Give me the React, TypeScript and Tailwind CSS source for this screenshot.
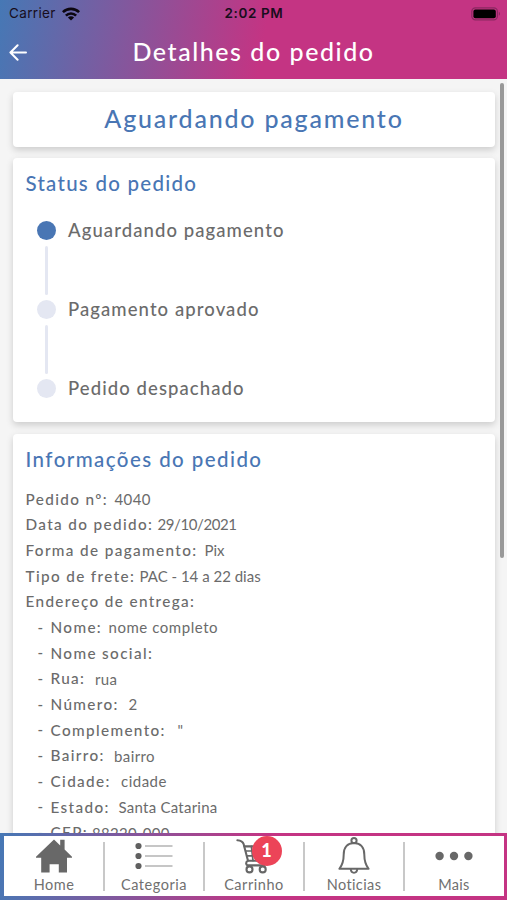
import React from "react";

type Info = { label: string; value?: string; width: string; spacing?: string };

const orderInfo: Info[] = [
  { label: "Pedido nº:", value: "4040", width: "w-[89px]", spacing: "tracking-[0.4px]" },
  { label: "Data do pedido:", value: "29/10/2021", width: "w-[132px]", spacing: "tracking-[-0.4px]" },
  { label: "Forma de pagamento:", value: "Pix", width: "w-[179px]", spacing: "tracking-[0px]" },
  { label: "Tipo de frete:", value: "PAC - 14 a 22 dias", width: "w-[114px]", spacing: "tracking-[0px]" },
  { label: "Endereço de entrega:", width: "w-[180px]" },
];

const address: Info[] = [
  { label: "Nome:", value: "nome completo", width: "w-[58px]", spacing: "tracking-[0.55px]" },
  { label: "Nome social:", width: "w-[110px]" },
  { label: "Rua:", value: "rua", width: "w-[44.5px]", spacing: "tracking-[0.4px]" },
  { label: "Número:", value: "2", width: "w-[78px]" },
  { label: "Complemento:", value: "\"", width: "w-[127px]" },
  { label: "Bairro:", value: "bairro", width: "w-[63.5px]", spacing: "tracking-[0.4px]" },
  { label: "Cidade:", value: "cidade", width: "w-[70.5px]", spacing: "tracking-[0.5px]" },
  { label: "Estado:", value: "Santa Catarina", width: "w-[68px]", spacing: "tracking-[0.25px]" },
  { label: "CEP:", value: "88220-000", width: "w-[41.5px]", spacing: "tracking-[0.3px]" },
];

function InfoRow({ label, value, width, spacing = "" }: Info) {
  return (
    <div className="flex h-[25.68px] items-center text-[15px] whitespace-nowrap">
      <span className={`${width} text-[15.3px] font-medium tracking-[1.36px]`}>{label}</span>
      {value && <span className={spacing}>{value}</span>}
    </div>
  );
}

function Step({ label, active, last }: { label: string; active?: boolean; last?: boolean }) {
  return (
    <div className={`flex ${last ? "h-[19px]" : "h-[79.4px]"}`}>
      <div className="flex w-[19px] flex-col items-center">
        <div className={`size-[19px] shrink-0 rounded-full ${active ? "bg-[#4976b4]" : "bg-[#e4e7f2]"}`} />
        {!last && <div className="mt-[6px] h-[49px] w-[2.6px] rounded-full bg-[#e4e7f2]" />}
      </div>
      <span className="ml-[12px] text-[18.5px] leading-[18px] font-medium tracking-[1.08px] whitespace-nowrap">{label}</span>
    </div>
  );
}

function HomeIcon() {
  return (
    <svg width="36" height="34" viewBox="0 0 36 34" fill="#686868">
      <path d="M18 0.5 24.2 6.4V0.8H28.6V10.6L36 17.8V18.8H31V33.4H22.8V25.2H13.6V33.4H5.2V18.8H0V17.8Z" />
    </svg>
  );
}

function ListIcon() {
  return (
    <svg width="38" height="28" viewBox="0 0 38 28">
      <g fill="#606060">
        <circle cx="3.5" cy="4" r="3.1" />
        <circle cx="3.5" cy="14" r="3.1" />
        <circle cx="3.5" cy="24" r="3.1" />
      </g>
      <path d="M10 4H37.5M10 14H37.5M10 24H37.5" stroke="#b4b4b4" strokeWidth="1.3" />
    </svg>
  );
}

function CartIcon() {
  return (
    <svg width="35" height="36" viewBox="0 0 35 36" fill="none" stroke="#666666" strokeWidth="2.1" strokeLinecap="round" strokeLinejoin="round">
      <path d="M1.4 2.2C4.5 2.5 6.8 3.2 7.6 6L12 22.7C10.4 23.6 10 24.5 10.2 25.6C10.4 26.8 11.3 27.4 12.6 27.4H28.5" />
      <path d="M8.6 8.4H31.5L28.3 22.7H12" />
      <path d="M9.8 13H30.4M11 17.8H29.4M15.4 8.4 17 22.7M20.5 8.4 21 22.7M26 8.4 25 22.7" strokeWidth="1.7" />
      <circle cx="13.5" cy="31.4" r="3" fill="white" />
      <circle cx="26.7" cy="31.4" r="3" fill="white" />
    </svg>
  );
}

function BellIcon() {
  return (
    <svg width="32" height="37" viewBox="0 0 32 37" fill="none" stroke="#686868" strokeWidth="2" strokeLinejoin="round">
      <circle cx="16" cy="3.6" r="2.6" />
      <path d="M16 6C9 6 5.7 11 5.7 17.5C5.7 24 4.8 27.5 1.4 31.8H30.6C27.2 27.5 26.3 24 26.3 17.5C26.3 11 23 6 16 6Z" />
      <path d="M12.7 31.8C12.9 34.5 14 35.8 16 35.8S19.1 34.5 19.3 31.8" />
    </svg>
  );
}

function MoreIcon() {
  return (
    <svg width="38" height="10" viewBox="0 0 38 10" fill="#686868">
      <circle cx="4.6" cy="5" r="4.2" />
      <circle cx="19" cy="5" r="4.2" />
      <circle cx="33.4" cy="5" r="4.2" />
    </svg>
  );
}

function Tab({ label, spacing, last, children }: { label: string; spacing: string; last?: boolean; children: React.ReactNode }) {
  return (
    <div className="relative flex w-[100px] shrink-0 flex-col items-center">
      <div className="flex h-[40px] items-center justify-center">{children}</div>
      <span className={`text-[14.5px] leading-[17px] text-[#707070] ${spacing}`}>{label}</span>
      {!last && <div className="absolute top-[6px] -right-[0.5px] h-[49px] w-[1.5px] bg-[#c8c8c8]" />}
    </div>
  );
}

export default function App() {
  return (
    <div className="flex h-[900px] w-[507px] flex-col overflow-hidden bg-[#f5f5f5] font-['Lato',sans-serif] text-[#6b6b6b]">
      <header className="h-[79px] shrink-0 bg-[linear-gradient(100deg,#4678b5_0%,#c43483_52%)]">
        <div className="grid h-[27px] grid-cols-3 items-center font-['Inter',sans-serif] text-[13.5px] text-[#180d1c]">
          <div className="flex items-center gap-[6px] pl-[9px]">
            <span className="tracking-[0.35px]">Carrier</span>
            <svg width="18" height="14" viewBox="0 0 18 14" fill="none" stroke="#0c0610" strokeWidth="2.6">
              <path d="M0.9 5.2A11.5 11.5 0 0 1 17.1 5.2" />
              <path d="M3.9 8.6A7.2 7.2 0 0 1 14.1 8.6" />
              <path d="M9 13.6 5.9 10.5A4.4 4.4 0 0 1 12.1 10.5Z" fill="#0c0610" stroke="none" />
            </svg>
          </div>
          <span className="pl-px text-center text-[13.5px] font-semibold tracking-[0.6px]">2:02 PM</span>
          <svg className="ml-auto mr-[6px]" width="30" height="14" viewBox="0 0 30 14">
            <rect x="0.8" y="0.8" width="25.6" height="12" rx="3.6" fill="none" stroke="#8a2861" strokeWidth="1.2" />
            <rect x="2.4" y="2.4" width="22.4" height="8.8" rx="2" fill="#000" />
            <path d="M27.8 4.8C29.4 5.4 29.4 8.2 27.8 8.8Z" fill="#8a2861" />
          </svg>
        </div>
        <div className="grid h-[50px] grid-cols-[60px_1fr_60px] items-center text-white">
          <svg className="ml-[9px]" width="18" height="17" viewBox="0 0 18 17" fill="none" stroke="white" strokeWidth="2" strokeLinecap="round" strokeLinejoin="round">
            <path d="M17 8.5H1.4M8.6 1.2 1.4 8.5 8.6 15.8" />
          </svg>
          <h1 className="text-center text-[25px] font-medium tracking-[1.55px]">Detalhes do pedido</h1>
        </div>
      </header>

      <main className="relative flex h-[754px] shrink-0 flex-col overflow-hidden pt-[12.5px] pr-[12px] pl-[13px]">
        <section className="flex h-[55px] shrink-0 items-center justify-center rounded-[4px] bg-white pb-px shadow-[0_3px_7px_rgba(0,0,0,0.17)]">
          <h2 className="text-[25px] font-medium tracking-[1.8px] text-[#4976b4]">Aguardando pagamento</h2>
        </section>

        <section className="mt-[11.5px] h-[264px] shrink-0 rounded-[4px] bg-white pt-[12px] pl-[12.5px] shadow-[0_3px_7px_rgba(0,0,0,0.17)]">
          <h3 className="text-[20.5px] leading-[26px] font-medium tracking-[1.25px] text-[#4976b4]">Status do pedido</h3>
          <div className="mt-[24.5px] ml-[11.5px]">
            <Step label="Aguardando pagamento" active />
            <Step label="Pagamento aprovado" />
            <Step label="Pedido despachado" last />
          </div>
        </section>

        <section className="mt-[12px] h-[600px] shrink-0 rounded-[4px] bg-white pt-[12px] pl-[12.5px] shadow-[0_3px_7px_rgba(0,0,0,0.17)]">
          <h3 className="text-[20.5px] leading-[26px] font-medium tracking-[1.43px] text-[#4976b4]">Informações do pedido</h3>
          <div className="mt-[14.2px]">
            {orderInfo.map((row) => <InfoRow key={row.label} {...row} />)}
            {address.map((row) => (
              <div key={row.label} className="flex pl-[12px]">
                <span className="w-[13px] text-[15px] leading-[25.68px] font-medium">-</span>
                <InfoRow {...row} />
              </div>
            ))}
          </div>
        </section>

        <div className="absolute top-[4px] right-[3px] h-[475px] w-[4.5px] rounded-full bg-[#999999]" />
      </main>

      <nav className="h-[67px] shrink-0 bg-[linear-gradient(100deg,#4678b5_0%,#c43483_52%)] pt-[2.5px] pr-[3.5px] pb-[4px] pl-[4px]">
        <div className="flex h-full bg-white">
          <Tab label="Home" spacing="tracking-[0.5px]"><HomeIcon /></Tab>
          <Tab label="Categoria" spacing="tracking-[0.55px]"><ListIcon /></Tab>
          <Tab label="Carrinho" spacing="tracking-[0.55px]">
            <div className="relative mr-[2px]">
              <CartIcon />
              <span className="absolute -top-[2px] left-[16px] flex size-[30px] items-center justify-center rounded-full bg-[#ec4458] text-[18px] font-black text-white">1</span>
            </div>
          </Tab>
          <Tab label="Noticias" spacing="tracking-[0.4px]"><BellIcon /></Tab>
          <Tab label="Mais" spacing="tracking-[0.3px]" last><MoreIcon /></Tab>
        </div>
      </nav>
    </div>
  );
}
